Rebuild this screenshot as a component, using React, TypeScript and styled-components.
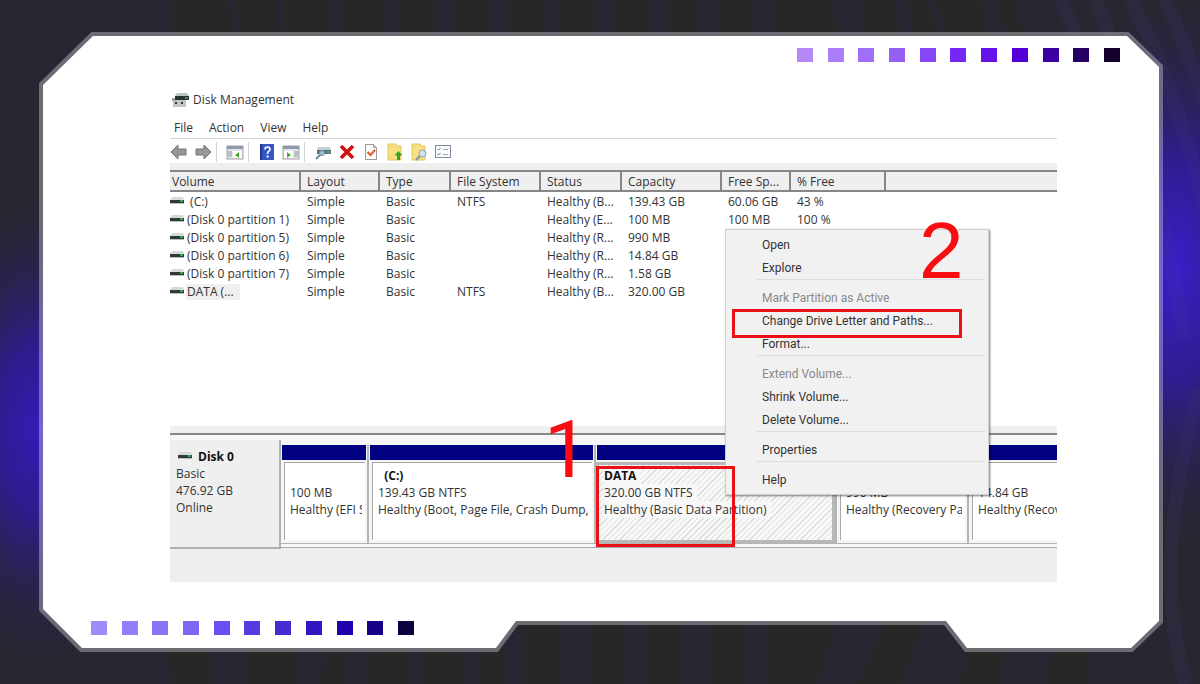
import React from "react";
import styled, { createGlobalStyle, css } from "styled-components";

const GlobalStyle = createGlobalStyle`
  *, *::before, *::after { box-sizing: border-box; }
  body {
    margin: 0;
    background: #29262f;
    color: #333;
    font: 12px/18px "Open Sans", "Noto Sans", sans-serif;
  }
`;

const Stage = styled.div`
  position: relative;
  isolation: isolate;
  min-height: 100vh;
  display: flex;
  flex-direction: column;
  overflow: hidden;
`;

const Backdrop = styled.svg`
  position: absolute;
  inset: 0;
  z-index: -1;
  width: 100%;
  height: 100%;
`;

const DotRow = styled.div<{ $end?: boolean }>`
  display: flex;
  justify-content: space-between;
  width: 323px;
  align-self: ${(p) => (p.$end ? "flex-end" : "flex-start")};
  margin: ${(p) => (p.$end ? "48px 80px 0 0" : "0 0 49px 91px")};
`;

const Dot = styled.span<{ $color: string }>`
  width: 16px;
  height: 14px;
  background: ${(p) => p.$color};
`;

const Window = styled.main`
  position: relative;
  flex: 1;
  display: flex;
  flex-direction: column;
  margin: 28px 143px 39px 170px;
`;

const TitleBar = styled.header`
  display: flex;
  align-items: center;
  gap: 4px;
  height: 20px;
  padding-left: 2px;
`;

const Title = styled.h1`
  margin: 0;
  font: inherit;
`;

const MenuBar = styled.nav`
  display: flex;
  align-items: center;
  gap: 16px;
  height: 29px;
  padding: 8px 4px 0;
  border-bottom: 1px solid #d4d4d4;
`;

const plainButton = css`
  border: 0;
  padding: 0;
  background: none;
  color: inherit;
  font: inherit;
`;

const MenuButton = styled.button`
  ${plainButton}
`;

const Toolbar = styled.div`
  display: flex;
  align-items: center;
  height: 24px;
  padding-top: 2px;
`;

const ToolGroup = styled.div`
  display: flex;
  align-items: center;
  gap: 6px;
  height: 20px;
  padding: 0 4px 0 9px;
  &:first-child { padding-left: 0; }
  & + & { border-left: 1px solid #d2d2d2; }
`;

const ToolButton = styled.button`
  ${plainButton}
  display: flex;
  width: 18px;
  height: 18px;
`;

const VolumePane = styled.section`
  flex: 1;
  border-top: 7px solid #efefef;
  border-bottom: 7px solid #efefef;
`;

const VolumeTable = styled.table`
  width: 100%;
  table-layout: fixed;
  border-collapse: separate;
  border-spacing: 0;
  white-space: nowrap;
`;

const HeadCell = styled.th<{ $width?: number }>`
  width: ${(p) => (p.$width ? `${p.$width}px` : "auto")};
  height: 22px;
  padding: 2px 0 0 6px;
  border: solid #868686;
  border-width: 2px 2px 2px 0;
  background: #efefef;
  font-weight: 400;
  line-height: 16px;
  text-align: left;
  vertical-align: bottom;
  &:first-child { padding-left: 2px; }
  &:last-child { border-right: 0; }
`;

const Cell = styled.td`
  height: 18px;
  padding: 2px 0 0 6px;
  line-height: 16px;
  &:first-child { padding-left: 0; }
`;

const VolumeName = styled.span<{ $selected?: boolean }>`
  display: inline-block;
  margin-left: 2px;
  padding: 0 6px 0 1px;
  white-space: pre;
  background: ${(p) => (p.$selected ? "#efefef" : "none")};
`;

const DiskPane = styled.section`
  display: flex;
  align-items: flex-start;
  height: 149px;
  padding-top: 5px;
  border-top: 2px solid #868686;
  background: linear-gradient(#f6f6f6 0 112px, #eee 112px);
  line-height: 17px;
`;

const DiskLabel = styled.div`
  width: 111px;
  height: 109px;
  padding: 8px 6px;
  border: solid #b0b0b0;
  border-width: 0 2px 2px 0;
  background: #efefef;
`;

const DiskName = styled.strong`
  display: flex;
  align-items: center;
  gap: 6px;
  padding-left: 2px;
  color: #111;
`;

const Partitions = styled.div`
  flex: 1;
  min-width: 0;
  display: flex;
  height: 108px;
  padding-top: 5px;
  border-bottom: 1px solid #aaa;
`;

const Bar = styled.div`
  height: 15px;
  margin: 0 1px;
  background: #000080;
`;

const PartitionBody = styled.div<{ $selected?: boolean }>`
  flex: 1;
  margin: 2px 2px 3px 3px;
  padding: 4px 3px 0 5px;
  border: solid #a8a8a8;
  border-width: 1px 0 0 1px;
  background: #fff;
  ${(p) =>
    p.$selected &&
    css`
      margin: 2px 0 0;
      padding: 2px 0 0 5px;
      border: 3px solid #b8b8b8;
      background: repeating-linear-gradient(135deg, #f8f8f8 0 3px, #dcdcdc 3px 4px);
    `}
`;

const Partition = styled.article<{ $width?: number }>`
  flex: ${(p) => (p.$width ? `0 0 ${p.$width}px` : "1 1 0")};
  min-width: 0;
  display: flex;
  flex-direction: column;
  height: 99px;
  border: solid #b4b4b4;
  border-width: 0 2px 1px 0;
  &:last-child {
    border-right: 0;
    ${Bar} { margin-right: 0; }
    ${PartitionBody} { margin-right: 0; padding-right: 0; }
  }
`;

const PartitionLine = styled.div`
  height: 17px;
  overflow: hidden;
  white-space: nowrap;
`;

const PartitionText = styled.span<{ $selected?: boolean; $bold?: boolean }>`
  display: inline-block;
  white-space: pre;
  padding-right: ${(p) => (p.$selected ? "4px" : "0")};
  background: ${(p) => (p.$selected ? "#f8f8f8" : "none")};
  font-weight: ${(p) => (p.$bold ? 700 : 400)};
  color: ${(p) => (p.$bold ? "#111" : "inherit")};
`;

const ContextMenu = styled.div`
  position: absolute;
  top: 139px;
  left: 555px;
  width: 264px;
  padding: 3px 3px 3px 30px;
  border: 1px solid #cfcfcf;
  background: #f1f1f1;
  box-shadow: 1px 1px 2px rgba(0, 0, 0, 0.5);
  font-family: Roboto, sans-serif;
`;

const MenuGroup = styled.div`
  & + & {
    border-top: 1px solid #dedede;
    padding-top: 6px;
  }
`;

const MenuItem = styled.button`
  ${plainButton}
  display: block;
  width: 100%;
  height: 23px;
  padding-left: 6px;
  text-align: left;
  &:disabled { color: #8a8a8a; }
`;

const Callout = styled.div<{ $x: number; $y: number; $w: number; $h: number }>`
  position: absolute;
  left: ${(p) => p.$x}px;
  top: ${(p) => p.$y}px;
  width: ${(p) => p.$w}px;
  height: ${(p) => p.$h}px;
  border: 3px solid #ea1016;
  pointer-events: none;
`;

const StepNumber = styled.span<{ $x: number; $y: number; $font: string }>`
  position: absolute;
  left: ${(p) => p.$x}px;
  top: ${(p) => p.$y}px;
  color: #f80d10;
  font: 80px/80px ${(p) => p.$font}, sans-serif;
  pointer-events: none;
`;

const topDots = ["#b588f8", "#ab7df9", "#a06ffa", "#9560f5", "#8646f8", "#7428f5", "#6313e8", "#5300d8", "#3c00a0", "#260060", "#14002c"];
const bottomDots = ["#9f8bfa", "#947ffa", "#8974f8", "#7d65f6", "#6a4df5", "#573ae0", "#452bd2", "#3116c2", "#2200ac", "#160086", "#0c003e"];

const DriveIcon = () => (
  <svg width="14" height="9" viewBox="0 0 14 9" aria-hidden="true">
    <path d="M2 0h11l1 3H0z" fill="#d5dbd8" />
    <rect y="3" width="14" height="3" fill="#303b35" />
    <rect x="10" y="3" width="3" height="2" fill="#3fa35b" />
    <rect y="6" width="14" height="1" fill="#b8c0bb" />
  </svg>
);

const AppIcon = () => (
  <svg width="17" height="16" viewBox="0 0 17 16" aria-hidden="true">
    <path d="M5 1h10l2 3H3z" fill="#b9c4c4" />
    <rect x="3" y="4" width="14" height="4" fill="#26352f" />
    <rect x="13" y="5" width="3" height="2" fill="#3c8a5a" />
    <path d="M1 8h13v7H1z" fill="#c3c4cb" />
    <path d="M0 6h3v3H0z" fill="#9da0a8" />
    <rect x="3" y="10" width="2" height="2" fill="#333" />
    <rect x="9" y="10" width="2" height="2" fill="#333" />
  </svg>
);

const Arrow = ({ flip }: { flip?: boolean }) => (
  <svg width="18" height="18" viewBox="0 0 18 18" aria-hidden="true">
    <path
      d="M1 9l7-7v4h8v6H8v4z"
      transform={flip ? "matrix(-1 0 0 1 18 0)" : undefined}
      fill="#979797"
      stroke="#747474"
    />
  </svg>
);

const PanelIcon = ({ right }: { right?: boolean }) => (
  <svg width="18" height="18" viewBox="0 0 18 18" aria-hidden="true">
    <rect x="1" y="3" width="16" height="13" fill="#e4e7e4" stroke="#9ba0a8" />
    <rect x="1" y="3" width="16" height="3" fill="#8d99ad" />
    <path d={right ? "M2 8h9v7H2z" : "M7 8h9v7H7z"} fill="#fff" />
    <path d={right ? "M12 9h4M12 11h4M12 13h4" : "M2 9h4M2 11h4M2 13h4"} stroke="#8c959e" />
    <path d={right ? "M5 9l4 3-4 3z" : "M13 9l-4 3 4 3z"} fill="#4aa834" />
  </svg>
);

const HelpIcon = () => (
  <svg width="18" height="18" viewBox="0 0 18 18" aria-hidden="true">
    <rect x="2" y="1" width="14" height="16" fill="#3557c4" />
    <rect x="2" y="1" width="2" height="16" fill="#203a96" />
    <path d="M7 6.500q0-2.500 2.500-2.500t2.500 2.300q0 1.500-1.500 2.200-1 .6-1 2.500" fill="none" stroke="#fff" strokeWidth="1.600" />
    <rect x="8.700" y="12.500" width="2" height="2" fill="#fff" />
  </svg>
);

const ScanIcon = () => (
  <svg width="18" height="18" viewBox="0 0 18 18" aria-hidden="true">
    <path d="M4 4h12l1 3H3z" fill="#c2d1d6" />
    <rect x="3" y="7" width="14" height="4" fill="#5b7275" />
    <rect x="13" y="8" width="3" height="2" fill="#3faa78" />
    <path d="M7 11l-5 5" stroke="#6d8ca3" strokeWidth="2" />
    <circle cx="8" cy="10" r="2.500" fill="#9cc4da" stroke="#7390a0" />
  </svg>
);

const DeleteIcon = () => (
  <svg width="18" height="18" viewBox="0 0 18 18" aria-hidden="true">
    <path d="M3 3l12 12M15 3L3 15" stroke="#cf1010" strokeWidth="3.600" />
  </svg>
);

const CheckPageIcon = () => (
  <svg width="18" height="18" viewBox="0 0 18 18" aria-hidden="true">
    <path d="M3.500 1.500h8l3 3v12h-11z" fill="#fafafa" stroke="#999" />
    <path d="M11.500 1.500v3h3" fill="none" stroke="#999" />
    <path d="M5.500 9l3 3 4.500-5" fill="none" stroke="#e0592b" strokeWidth="2" />
  </svg>
);

const FolderIcon = ({ search }: { search?: boolean }) => (
  <svg width="18" height="18" viewBox="0 0 18 18" aria-hidden="true">
    <path d="M2 1h8l1 2h4v14H2z" fill="#f9df83" stroke="#e6c560" />
    {search ? (
      <>
        <path d="M10 13l-4 4" stroke="#7a93a8" strokeWidth="2" />
        <circle cx="12.500" cy="10.500" r="3.500" fill="#cfe6f2" stroke="#8aa5b5" />
      </>
    ) : (
      <path d="M12.500 8l4 4.500h-2.500V17h-3v-4.500H8.500z" fill="#3aa51f" />
    )}
  </svg>
);

const ListIcon = () => (
  <svg width="18" height="18" viewBox="0 0 18 18" aria-hidden="true">
    <rect x="1.500" y="2.500" width="15" height="12" fill="#fbfbfb" stroke="#7e8ba0" />
    <path d="M3.500 6l1 1 2-2M3.500 11l1 1 2-2" fill="none" stroke="#3e76bd" />
    <path d="M9 6.500h5M9 11.500h5" stroke="#aaa" />
  </svg>
);

const columns: [string, number?][] = [
  ["Volume", 131],
  ["Layout", 79],
  ["Type", 71],
  ["File System", 90],
  ["Status", 81],
  ["Capacity", 100],
  ["Free Sp...", 69],
  ["% Free", 95],
  [""],
];

const volumes = [
  [" (C:)", "Simple", "Basic", "NTFS", "Healthy (B...", "139.43 GB", "60.06 GB", "43 %"],
  ["(Disk 0 partition 1)", "Simple", "Basic", "", "Healthy (E...", "100 MB", "100 MB", "100 %"],
  ["(Disk 0 partition 5)", "Simple", "Basic", "", "Healthy (R...", "990 MB", "", ""],
  ["(Disk 0 partition 6)", "Simple", "Basic", "", "Healthy (R...", "14.84 GB", "", ""],
  ["(Disk 0 partition 7)", "Simple", "Basic", "", "Healthy (R...", "1.58 GB", "", ""],
  ["DATA (...", "Simple", "Basic", "NTFS", "Healthy (B...", "320.00 GB", "", ""],
];

const partitions: { name: string; size: string; status: string; width?: number; selected?: boolean }[] = [
  { name: "", size: "100 MB", status: "Healthy (EFI System", width: 88 },
  { name: "  (C:)", size: "139.43 GB NTFS", status: "Healthy (Boot, Page File, Crash Dump,", width: 227 },
  { name: "DATA", size: "320.00 GB NTFS", status: "Healthy (Basic Data Partition)", width: 241, selected: true },
  { name: "", size: "990 MB", status: "Healthy (Recovery Partition)", width: 132 },
  { name: "", size: "14.84 GB", status: "Healthy (Recovery" },
];

const menuGroups: { label: string; disabled?: boolean }[][] = [
  [{ label: "Open" }, { label: "Explore" }],
  [{ label: "Mark Partition as Active", disabled: true }, { label: "Change Drive Letter and Paths..." }, { label: "Format..." }],
  [{ label: "Extend Volume...", disabled: true }, { label: "Shrink Volume..." }, { label: "Delete Volume..." }],
  [{ label: "Properties" }],
  [{ label: "Help" }],
];

const Tool = ({ label, children }: { label: string; children: React.ReactNode }) => (
  <ToolButton type="button" aria-label={label}>
    {children}
  </ToolButton>
);

const BackdropArt = () => (
  <Backdrop viewBox="0 0 1200 684" preserveAspectRatio="none" aria-hidden="true">
    <defs>
      <radialGradient id="glowLeft" gradientUnits="userSpaceOnUse" cx="0" cy="0" r="1" gradientTransform="translate(40 430) scale(130 240)">
        <stop offset="0" stopColor="#331cb8" />
        <stop offset=".35" stopColor="#301a9c" stopOpacity=".85" />
        <stop offset="1" stopColor="#2a2040" stopOpacity="0" />
      </radialGradient>
      <radialGradient id="glowRight" gradientUnits="userSpaceOnUse" cx="0" cy="0" r="1" gradientTransform="translate(1175 270) scale(130 280)">
        <stop offset="0" stopColor="#3a1ecb" />
        <stop offset=".4" stopColor="#311ba0" stopOpacity=".85" />
        <stop offset="1" stopColor="#2a2040" stopOpacity="0" />
      </radialGradient>
    </defs>
    <rect width="1200" height="684" fill="#292631" />
    <g fill="#272727">
      <path d="M172 0h56l4 34h-60zM237 0h40l2 34h-40zM283 0h46v34h-44zM344 0h38v34h-38zM400 0h36v34h-36zM452 0h36v34h-36zM508 0h34v34h-34zM562 0h34v34h-34zM616 0h32v34h-32zM668 0h32v34h-32zM722 0h32v34h-32zM775 0h58l4 34h-58zM860 0h34l7 34h-34zM907 0h20l8 34h-22zM937 0h42l10 34h-42zM998 0h14l12 34h-18z" />
      <path d="M170 650h42v34h-40zM246 650h52v34h-54zM324 650h24v34h-26zM370 650h36v34h-38zM426 650h36v34h-36zM482 650h24v34h-24zM524 622h34v62h-34zM590 622h34v62h-34zM650 622h32v62h-32zM710 622h32v62h-34zM770 622h66l-20 62h-50zM886 622h38l-24 62h-42zM970 650h36l-6 34h-42zM1052 650h36l-2 34h-38z" />
    </g>
    <rect width="200" height="684" fill="url(#glowLeft)" />
    <rect x="1000" width="200" height="684" fill="url(#glowRight)" />
    <g fill="none" stroke="#4b3c8c" strokeOpacity=".13" strokeWidth="14">
      <path d="M1060 0q45 90 90 300M1095 0q50 110 90 340M1130 0q45 80 80 230M1165 0q20 40 45 120M1200 390q-50 170-14 294" />
    </g>
    <path
      d="M93 36H1127L1159 67V621L1131 648H967L946 621H516L496 648H82L43 609V85z"
      fill="#fff"
      stroke="#fff"
      strokeOpacity=".32"
      strokeWidth="8"
      paintOrder="stroke"
    />
  </Backdrop>
);

export default function App() {
  return (
    <>
      <GlobalStyle />
      <Stage>
        <BackdropArt />
        <DotRow $end>
          {topDots.map((c) => <Dot key={c} $color={c} />)}
        </DotRow>
        <Window>
          <TitleBar>
            <AppIcon />
            <Title>Disk Management</Title>
          </TitleBar>
          <MenuBar>
            {["File", "Action", "View", "Help"].map((m) => <MenuButton type="button" key={m}>{m}</MenuButton>)}
          </MenuBar>
          <Toolbar>
            <ToolGroup>
              <Tool label="Back"><Arrow /></Tool>
              <Tool label="Forward"><Arrow flip /></Tool>
            </ToolGroup>
            <ToolGroup>
              <Tool label="Show console tree"><PanelIcon /></Tool>
            </ToolGroup>
            <ToolGroup>
              <Tool label="Help"><HelpIcon /></Tool>
              <Tool label="Show action pane"><PanelIcon right /></Tool>
            </ToolGroup>
            <ToolGroup>
              <Tool label="Rescan disks"><ScanIcon /></Tool>
              <Tool label="Delete"><DeleteIcon /></Tool>
              <Tool label="Properties"><CheckPageIcon /></Tool>
              <Tool label="Open"><FolderIcon /></Tool>
              <Tool label="Explore"><FolderIcon search /></Tool>
              <Tool label="Settings"><ListIcon /></Tool>
            </ToolGroup>
          </Toolbar>
          <VolumePane>
            <VolumeTable>
              <thead>
                <tr>{columns.map(([name, w]) => <HeadCell key={name} $width={w}>{name}</HeadCell>)}</tr>
              </thead>
              <tbody>
                {volumes.map(([name, ...rest]) => (
                  <tr key={name}>
                    <Cell>
                      <DriveIcon />
                      <VolumeName $selected={name.startsWith("DATA")}>{name}</VolumeName>
                    </Cell>
                    {rest.map((v, i) => <Cell key={i}>{v}</Cell>)}
                    <Cell />
                  </tr>
                ))}
              </tbody>
            </VolumeTable>
          </VolumePane>
          <DiskPane>
            <DiskLabel>
              <DiskName><DriveIcon />Disk 0</DiskName>
              <div>Basic</div>
              <div>476.92 GB</div>
              <div>Online</div>
            </DiskLabel>
            <Partitions>
              {partitions.map((p) => (
                <Partition key={p.size} $width={p.width}>
                  <Bar />
                  <PartitionBody $selected={p.selected}>
                    <PartitionLine><PartitionText $bold $selected={p.selected}>{p.name}</PartitionText></PartitionLine>
                    <PartitionLine><PartitionText $selected={p.selected}>{p.size}</PartitionText></PartitionLine>
                    <PartitionLine><PartitionText $selected={p.selected}>{p.status}</PartitionText></PartitionLine>
                  </PartitionBody>
                </Partition>
              ))}
            </Partitions>
          </DiskPane>
          <ContextMenu>
            {menuGroups.map((g) => (
              <MenuGroup key={g[0].label}>
                {g.map((m) => <MenuItem type="button" key={m.label} disabled={m.disabled}>{m.label}</MenuItem>)}
              </MenuGroup>
            ))}
          </ContextMenu>
          <Callout $x={426} $y={376} $w={139} $h={81} />
          <Callout $x={562} $y={219} $w={230} $h={29} />
          <StepNumber $x={374} $y={320} $font="Roboto">1</StepNumber>
          <StepNumber $x={749} $y={121} $font='"Liberation Sans"'>2</StepNumber>
        </Window>
        <DotRow>
          {bottomDots.map((c) => <Dot key={c} $color={c} />)}
        </DotRow>
      </Stage>
    </>
  );
}
